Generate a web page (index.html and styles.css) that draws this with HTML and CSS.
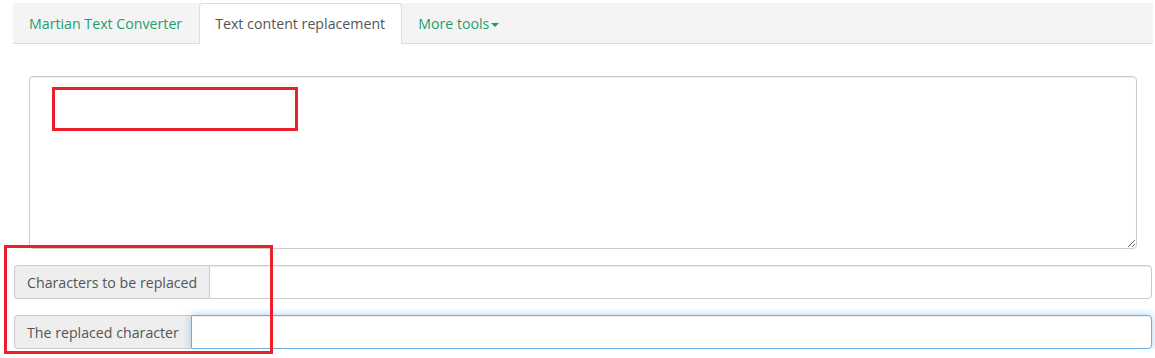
FILE: index.html
```html
<!DOCTYPE html>
<html lang="en">
<head>
  <meta charset="UTF-8" />
  <title>Text content replacement</title>
  <link rel="stylesheet" href="styles.css">
</head>
<body>

  <div class="page">

    <ul class="tabs">
      <li><a href="#">Martian Text Converter</a></li>
      <li class="active"><a href="#">Text content replacement</a></li>
      <li><a href="#">More tools<span class="caret"></span></a></li>
    </ul>

    <textarea class="content"></textarea>

    <div class="input-group">
      <span class="addon">Characters to be replaced</span>
      <input type="text" class="field" />
    </div>

    <div class="input-group">
      <span class="addon">The replaced character</span>
      <input type="text" class="field focused" />
    </div>

  </div>

  <div class="mark mark-text"></div>
  <div class="mark mark-labels"></div>

</body>
</html>
```

FILE: styles.css
```css
body {
  margin: 0;
  padding: 0;
  background: #fff;
  font-family: "Open Sans", "Liberation Sans", sans-serif;
  color: #555;
}
.page {
  width: 1140px;
  padding: 3px 0 0 13px;
}
.tabs {
  list-style: none;
  margin: 0;
  padding: 0;
  display: flex;
  height: 40px;
  background: #f4f4f4;
  border-bottom: 1px solid #ddd;
}
.tabs li {
  margin-bottom: -1px;
}
.tabs a {
  display: block;
  height: 40px;
  padding: 0 16px 0 15px;
  line-height: 40px;
  font-size: 14.2px;
  color: #1e9e6e;
  text-decoration: none;
  border: 1px solid transparent;
  border-bottom: none;
  box-sizing: content-box;
}
.tabs li.active a {
  background: #fff;
  color: #555;
  border-color: #ddd;
  border-radius: 4px 4px 0 0;
}
.caret {
  display: inline-block;
  width: 0;
  height: 0;
  margin-left: 2px;
  vertical-align: middle;
  border-top: 4px solid #1e9e6e;
  border-left: 4px solid transparent;
  border-right: 4px solid transparent;
}
.content {
  display: block;
  box-sizing: border-box;
  width: 1108px;
  height: 173px;
  margin: 32px 16px 0;
  border: 1px solid #ccc;
  border-radius: 4px;
  resize: vertical;
  box-shadow: inset 0 1px 1px rgba(0, 0, 0, .075);
}
.input-group {
  display: flex;
  height: 34px;
  margin: 16px 1px 0;
  font-size: 14.2px;
}
.addon {
  display: flex;
  align-items: center;
  padding: 0 12px;
  background: #eee;
  border: 1px solid #ccc;
  border-right: none;
  border-radius: 4px 0 0 4px;
  color: #555;
  white-space: nowrap;
}
.field {
  flex: 1;
  box-sizing: border-box;
  height: 34px;
  margin: 0;
  border: 1px solid #ccc;
  border-radius: 0 4px 4px 0;
  box-shadow: inset 0 1px 1px rgba(0, 0, 0, .075);
  outline: none;
}
.field.focused {
  border-color: #66afe9;
  box-shadow: inset 0 1px 1px rgba(0, 0, 0, .075), 0 0 8px rgba(102, 175, 233, .6);
}
.mark {
  position: absolute;
  border: 3px solid #e8212b;
  box-sizing: border-box;
}
.mark-text {
  left: 52px;
  top: 87px;
  width: 246px;
  height: 44px;
}
.mark-labels {
  left: 4px;
  top: 245px;
  width: 269px;
  height: 109px;
}
```
